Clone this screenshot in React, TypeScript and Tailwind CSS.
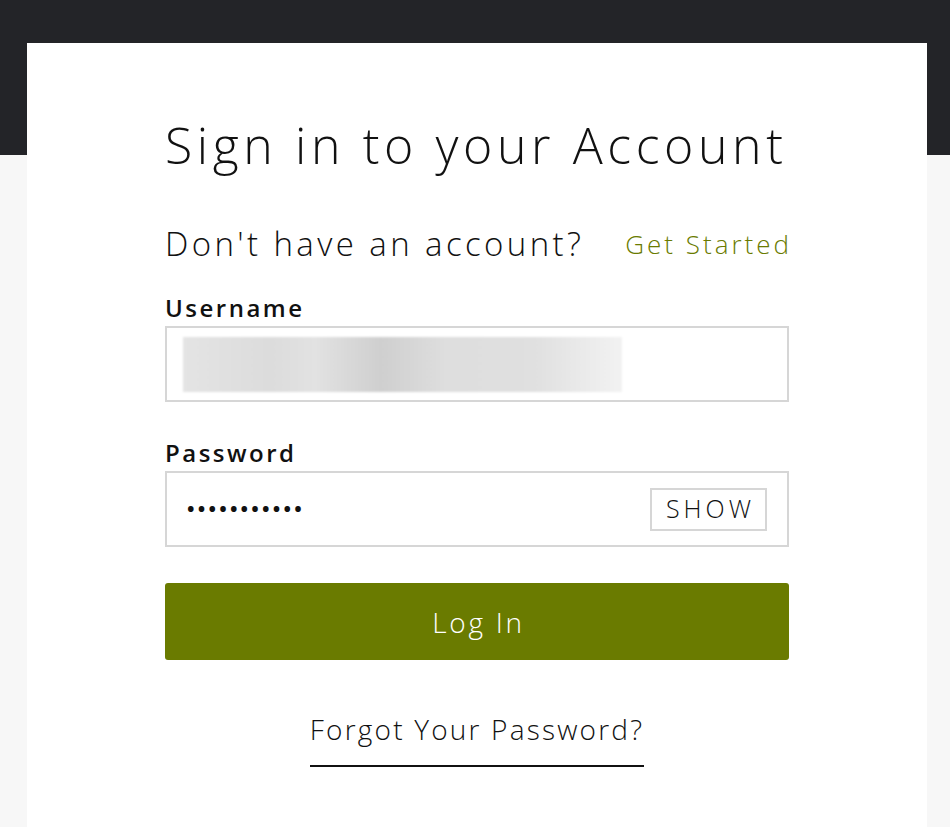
import React from "react";

export default function App() {
  return (
    <div
      className="min-h-[827px] w-full bg-[#f7f7f7] relative"
      style={{ fontFamily: '"Open Sans", "Noto Sans", sans-serif' }}
    >
      <div className="h-[155px] bg-[#232428]" />
      <div className="absolute left-[27px] right-[23px] top-[43px] bottom-0 bg-white">
        <div className="w-[624px] ml-[138px] pt-[70px] flex flex-col">
          <h1 className="text-[50px] font-light leading-[64px] text-[#111] tracking-[4.6px] whitespace-nowrap">
            Sign in to your Account
          </h1>
          <div className="mt-[45px] flex items-center justify-between h-[44px]">
            <span className="text-[33px] font-light text-[#111] tracking-[3.4px] whitespace-nowrap">Don't have an account?</span>
            <a className="text-[26px] font-light text-[#6a7b00] tracking-[3px] mr-[-3px] whitespace-nowrap">Get Started</a>
          </div>
          <label className="mt-[28px] text-[24px] font-semibold leading-[28px] text-[#111] tracking-[2.5px]">Username</label>
          <div className="mt-[4px] h-[76px] border-2 border-[#d6d6d6] flex items-center pl-[16px]">
            <div
              className="h-[55px] w-[439px]"
              style={{
                background:
                  "linear-gradient(90deg, #e4e4e4 0%, #dcdcdc 20%, #e2e2e2 30%, #cfcfcf 45%, #dedede 60%, #e0e0e0 80%, #f2f2f2 100%)",
                filter: "blur(1px)",
              }}
            />
          </div>
          <label className="mt-[37px] text-[24px] font-semibold leading-[28px] text-[#111] tracking-[2.5px]">Password</label>
          <div className="mt-[4px] h-[76px] border-2 border-[#d6d6d6] flex items-center justify-between pl-[20px] pr-[20px]">
            <span className="text-[20px] tracking-[3.2px] text-[#111] font-bold">•••••••••••</span>
            <button className="h-[43px] w-[117px] border-2 border-[#d6d6d6] text-[25px] font-light text-[#111] flex items-center justify-center tracking-[4px] pl-[4px]">
              SHOW
            </button>
          </div>
          <button className="mt-[36px] h-[77px] rounded-[3px] bg-[#6a7b00] text-white text-[28px] font-light flex items-center justify-center tracking-[2.7px] pl-[3px]">
            Log In
          </button>
          <div className="mt-[52px] flex justify-center">
            <a className="text-[28px] font-light text-[#111] leading-[34px] pb-[19px] border-b-2 border-[#111] tracking-[2.2px] whitespace-nowrap">
              Forgot Your Password?
            </a>
          </div>
        </div>
      </div>
    </div>
  );
}
